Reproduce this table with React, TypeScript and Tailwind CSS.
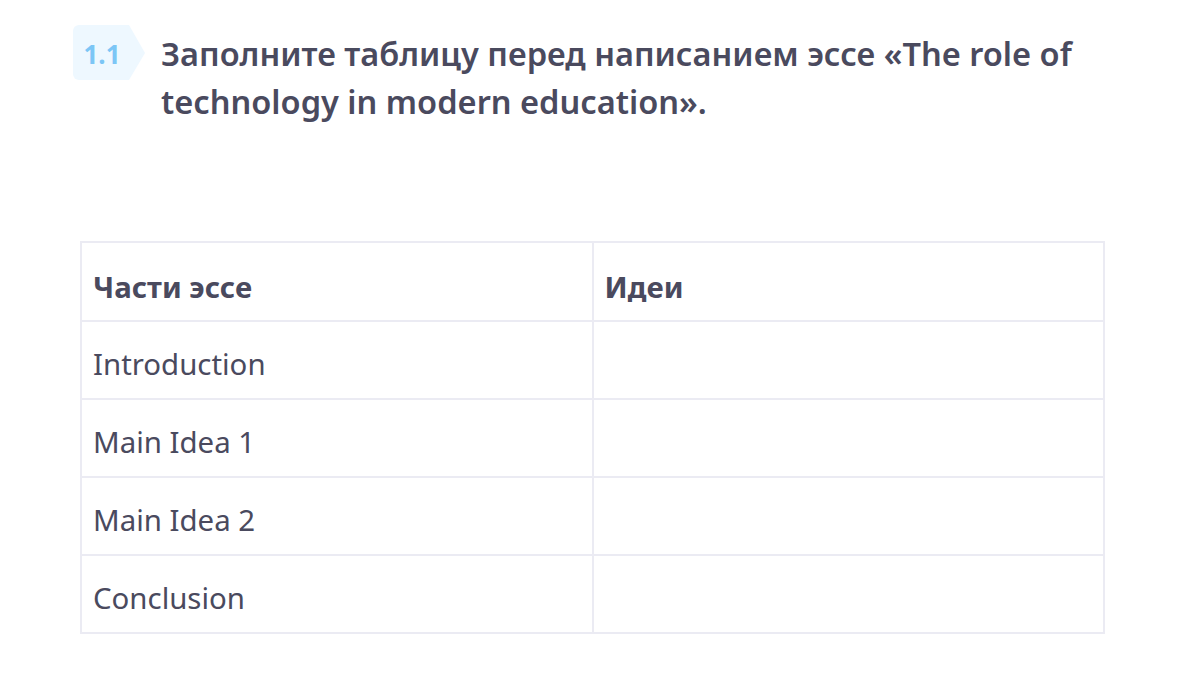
const rows = ["Introduction", "Main Idea 1", "Main Idea 2", "Conclusion"];

function Badge() {
  return (
    <div className="relative w-[72px] h-[55px] shrink-0">
      <svg className="absolute inset-0" width="72" height="55" viewBox="0 0 72 55">
        <path d="M6 0 H56 L72 28 L56 55 H6 A6 6 0 0 1 0 49 V6 A6 6 0 0 1 6 0 Z" fill="#eef8ff" />
      </svg>
      <span className="relative flex h-full w-[58px] items-center justify-center pt-[3px] text-[26px] font-bold text-[#7cc6f6]">
        1.1
      </span>
    </div>
  );
}

export default function App() {
  return (
    <div className="min-h-[679px] bg-white pl-[73px] pt-[25px] text-[#4a4a5e] font-['Noto_Sans',sans-serif]">
      <div className="flex gap-4">
        <Badge />
        <h1 className="w-[940px] text-[32.6px] font-semibold leading-[48px] mt-[5px]">
          Заполните таблицу перед написанием эссе «The role of technology in modern education».
        </h1>
      </div>

      <table className="ml-[7px] mt-[115px] w-[1025px] border-collapse table-fixed text-[29.4px]">
        <thead>
          <tr className="h-[79px]">
            <th className="border-2 border-[#ebebf3] px-[11px] pt-[11px] text-left font-bold">Части эссе</th>
            <th className="border-2 border-[#ebebf3] px-[11px] pt-[11px] text-left font-bold">Идеи</th>
          </tr>
        </thead>
        <tbody>
          {rows.map((r) => (
            <tr key={r} className="h-[78px]">
              <td className="border-2 border-[#ebebf3] px-[11px] pt-[8px]">{r}</td>
              <td className="border-2 border-[#ebebf3] px-[11px] pt-[8px]"></td>
            </tr>
          ))}
        </tbody>
      </table>
    </div>
  );
}
